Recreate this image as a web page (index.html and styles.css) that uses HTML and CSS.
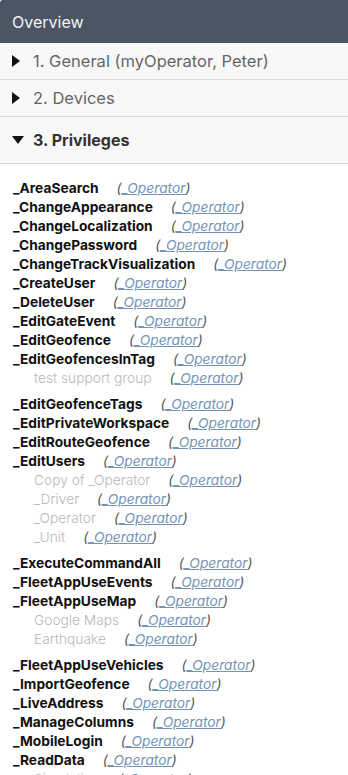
FILE: index.html
```html
<!DOCTYPE html>
<html>
<head>
    <meta charset="utf-8">
    <link rel="stylesheet" href="styles.css">
</head>
<body>
    <div class="overview">
        <div class="overview-header">Overview</div>

        <!-- collapsible sections -->
        <div class="section">
            <span class="arrow arrow-right"></span>
            <span class="section-title">1. General (myOperator, Peter)</span>
        </div>
        <div class="section">
            <span class="arrow arrow-right"></span>
            <span class="section-title">2. Devices</span>
        </div>
        <div class="section section-open">
            <span class="arrow arrow-down"></span>
            <span class="section-title">3. Privileges</span>
        </div>

        <!-- privileges list -->
        <ul class="priv-list">
            <li class="priv"><span class="priv-name">_AreaSearch</span><span class="priv-role">(<a href="#">_Operator</a>)</span></li>
            <li class="priv"><span class="priv-name">_ChangeAppearance</span><span class="priv-role">(<a href="#">_Operator</a>)</span></li>
            <li class="priv"><span class="priv-name">_ChangeLocalization</span><span class="priv-role">(<a href="#">_Operator</a>)</span></li>
            <li class="priv"><span class="priv-name">_ChangePassword</span><span class="priv-role">(<a href="#">_Operator</a>)</span></li>
            <li class="priv"><span class="priv-name">_ChangeTrackVisualization</span><span class="priv-role">(<a href="#">_Operator</a>)</span></li>
            <li class="priv"><span class="priv-name">_CreateUser</span><span class="priv-role">(<a href="#">_Operator</a>)</span></li>
            <li class="priv"><span class="priv-name">_DeleteUser</span><span class="priv-role">(<a href="#">_Operator</a>)</span></li>
            <li class="priv"><span class="priv-name">_EditGateEvent</span><span class="priv-role">(<a href="#">_Operator</a>)</span></li>
            <li class="priv"><span class="priv-name">_EditGeofence</span><span class="priv-role">(<a href="#">_Operator</a>)</span></li>
            <li class="priv has-sub"><span class="priv-name">_EditGeofencesInTag</span><span class="priv-role">(<a href="#">_Operator</a>)</span>
                <ul class="sub-list">
                    <li class="sub"><span class="sub-name">test support group</span><span class="priv-role">(<a href="#">_Operator</a>)</span></li>
                </ul>
            </li>
            <li class="priv"><span class="priv-name">_EditGeofenceTags</span><span class="priv-role">(<a href="#">_Operator</a>)</span></li>
            <li class="priv"><span class="priv-name">_EditPrivateWorkspace</span><span class="priv-role">(<a href="#">_Operator</a>)</span></li>
            <li class="priv"><span class="priv-name">_EditRouteGeofence</span><span class="priv-role">(<a href="#">_Operator</a>)</span></li>
            <li class="priv has-sub"><span class="priv-name">_EditUsers</span><span class="priv-role">(<a href="#">_Operator</a>)</span>
                <ul class="sub-list">
                    <li class="sub"><span class="sub-name">Copy of _Operator</span><span class="priv-role">(<a href="#">_Operator</a>)</span></li>
                    <li class="sub"><span class="sub-name">_Driver</span><span class="priv-role">(<a href="#">_Operator</a>)</span></li>
                    <li class="sub"><span class="sub-name">_Operator</span><span class="priv-role">(<a href="#">_Operator</a>)</span></li>
                    <li class="sub"><span class="sub-name">_Unit</span><span class="priv-role">(<a href="#">_Operator</a>)</span></li>
                </ul>
            </li>
            <li class="priv"><span class="priv-name">_ExecuteCommandAll</span><span class="priv-role">(<a href="#">_Operator</a>)</span></li>
            <li class="priv"><span class="priv-name">_FleetAppUseEvents</span><span class="priv-role">(<a href="#">_Operator</a>)</span></li>
            <li class="priv has-sub"><span class="priv-name">_FleetAppUseMap</span><span class="priv-role">(<a href="#">_Operator</a>)</span>
                <ul class="sub-list">
                    <li class="sub"><span class="sub-name">Google Maps</span><span class="priv-role">(<a href="#">_Operator</a>)</span></li>
                    <li class="sub"><span class="sub-name">Earthquake</span><span class="priv-role">(<a href="#">_Operator</a>)</span></li>
                </ul>
            </li>
            <li class="priv"><span class="priv-name">_FleetAppUseVehicles</span><span class="priv-role">(<a href="#">_Operator</a>)</span></li>
            <li class="priv"><span class="priv-name">_ImportGeofence</span><span class="priv-role">(<a href="#">_Operator</a>)</span></li>
            <li class="priv"><span class="priv-name">_LiveAddress</span><span class="priv-role">(<a href="#">_Operator</a>)</span></li>
            <li class="priv"><span class="priv-name">_ManageColumns</span><span class="priv-role">(<a href="#">_Operator</a>)</span></li>
            <li class="priv"><span class="priv-name">_MobileLogin</span><span class="priv-role">(<a href="#">_Operator</a>)</span></li>
            <li class="priv has-sub"><span class="priv-name">_ReadData</span><span class="priv-role">(<a href="#">_Operator</a>)</span>
                <ul class="sub-list">
                    <li class="sub"><span class="sub-name">Simulation</span><span class="priv-role">(<a href="#">_Operator</a>)</span></li>
                </ul>
            </li>
        </ul>
    </div>
</body>
</html>
```

FILE: styles.css
```css
body {
    margin: 0;
    background: #fff;
    font-family: Inter, "Noto Sans", sans-serif;
}
.overview {
    width: 348px;
    height: 775px;
    overflow: hidden;
}
.overview-header {
    height: 43px;
    box-sizing: border-box;
    padding: 0 12px;
    display: flex;
    align-items: center;
    background: #4b5563;
    color: #f3f4f6;
    font-size: 16px;
    border-top-left-radius: 3px;
}
.section {
    display: flex;
    align-items: center;
    height: 37px;
    box-sizing: border-box;
    padding-left: 12px;
    background: #f8f8f8;
    border-bottom: 1px solid #dcdcdc;
}
.section-open {
    height: 47px;
}
.section-title {
    font-size: 16.5px;
    color: #666;
}
.section-open .section-title {
    font-size: 16px;
    font-weight: 700;
    color: #333;
}
.arrow {
    display: inline-block;
    width: 0;
    height: 0;
}
.arrow-right {
    border-top: 6px solid transparent;
    border-bottom: 6px solid transparent;
    border-left: 8px solid #111;
    margin-right: 13px;
}
.arrow-down {
    border-left: 6px solid transparent;
    border-right: 6px solid transparent;
    border-top: 8px solid #111;
    margin-right: 9px;
}
.priv-list {
    list-style: none;
    margin: 0;
    padding: 15px 0 0 13px;
}
.priv {
    line-height: 19px;
    font-size: 13.75px;
}
.priv.has-sub {
    margin-bottom: 7px;
}
.priv-name {
    font-weight: 700;
    color: #111;
}
.priv-role {
    margin-left: 18px;
    font-style: italic;
    color: #555;
}
.priv-role a {
    color: #7393b4;
    text-decoration: underline;
}
.sub-list {
    list-style: none;
    margin: 0;
    padding: 0 0 0 21px;
}
.sub-name {
    font-weight: 300;
    color: #b8b8b8;
}
```
